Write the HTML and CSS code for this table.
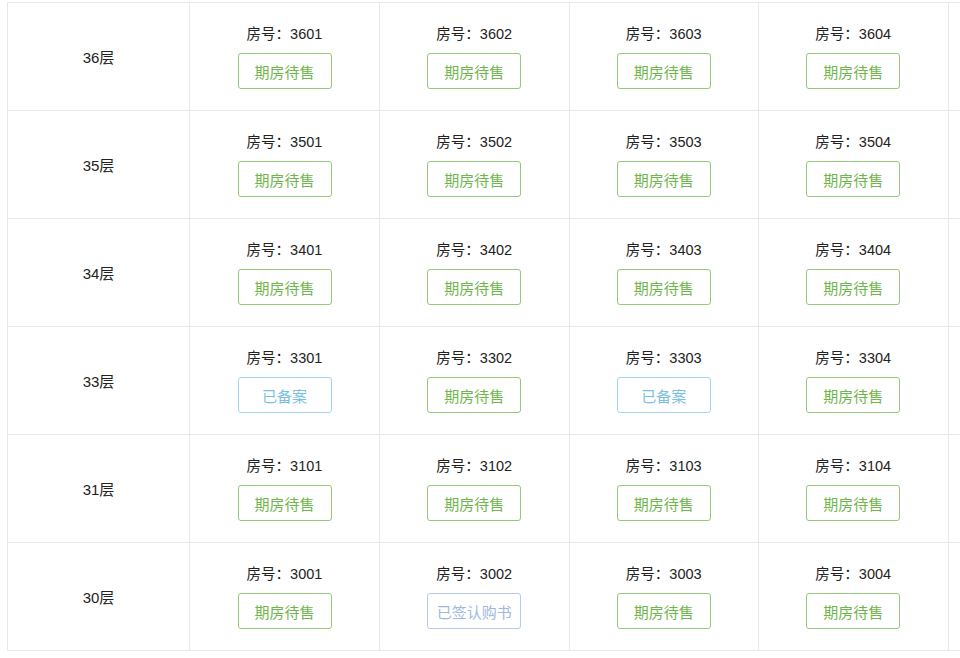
FILE: index.html
```html
<!DOCTYPE html>
<html lang="zh-CN">
<head>
<meta charset="utf-8">
<title>楼盘表</title>
<link rel="stylesheet" href="styles.css">
</head>
<body>
<div class="board">
  <div class="row">
    <div class="floor">36层</div>
    <div class="unit"><div class="no">房号：3601</div><div class="tag sale">期房待售</div></div>
    <div class="unit"><div class="no">房号：3602</div><div class="tag sale">期房待售</div></div>
    <div class="unit"><div class="no">房号：3603</div><div class="tag sale">期房待售</div></div>
    <div class="unit"><div class="no">房号：3604</div><div class="tag sale">期房待售</div></div>
    <div class="unit"></div>
  </div>
  <div class="row">
    <div class="floor">35层</div>
    <div class="unit"><div class="no">房号：3501</div><div class="tag sale">期房待售</div></div>
    <div class="unit"><div class="no">房号：3502</div><div class="tag sale">期房待售</div></div>
    <div class="unit"><div class="no">房号：3503</div><div class="tag sale">期房待售</div></div>
    <div class="unit"><div class="no">房号：3504</div><div class="tag sale">期房待售</div></div>
    <div class="unit"></div>
  </div>
  <div class="row">
    <div class="floor">34层</div>
    <div class="unit"><div class="no">房号：3401</div><div class="tag sale">期房待售</div></div>
    <div class="unit"><div class="no">房号：3402</div><div class="tag sale">期房待售</div></div>
    <div class="unit"><div class="no">房号：3403</div><div class="tag sale">期房待售</div></div>
    <div class="unit"><div class="no">房号：3404</div><div class="tag sale">期房待售</div></div>
    <div class="unit"></div>
  </div>
  <div class="row">
    <div class="floor">33层</div>
    <div class="unit"><div class="no">房号：3301</div><div class="tag filed">已备案</div></div>
    <div class="unit"><div class="no">房号：3302</div><div class="tag sale">期房待售</div></div>
    <div class="unit"><div class="no">房号：3303</div><div class="tag filed">已备案</div></div>
    <div class="unit"><div class="no">房号：3304</div><div class="tag sale">期房待售</div></div>
    <div class="unit"></div>
  </div>
  <div class="row">
    <div class="floor">31层</div>
    <div class="unit"><div class="no">房号：3101</div><div class="tag sale">期房待售</div></div>
    <div class="unit"><div class="no">房号：3102</div><div class="tag sale">期房待售</div></div>
    <div class="unit"><div class="no">房号：3103</div><div class="tag sale">期房待售</div></div>
    <div class="unit"><div class="no">房号：3104</div><div class="tag sale">期房待售</div></div>
    <div class="unit"></div>
  </div>
  <div class="row">
    <div class="floor">30层</div>
    <div class="unit"><div class="no">房号：3001</div><div class="tag sale">期房待售</div></div>
    <div class="unit"><div class="no">房号：3002</div><div class="tag signed">已签认购书</div></div>
    <div class="unit"><div class="no">房号：3003</div><div class="tag sale">期房待售</div></div>
    <div class="unit"><div class="no">房号：3004</div><div class="tag sale">期房待售</div></div>
    <div class="unit"></div>
  </div>
</div>
</body>
</html>
```
FILE: styles.css
```css
html, body {
  margin: 0;
  padding: 0;
  background: #fff;
  overflow: hidden;
}
body {
  font-family: "Liberation Sans", "Noto Sans CJK SC", sans-serif;
  color: #222;
}
.board {
  margin: 2px 0 0 7px;
  width: 953px;
  overflow: hidden;
  border-top: 1px solid #e8e8e8;
  border-left: 1px solid #e8e8e8;
}
.row {
  display: grid;
  grid-template-columns: 182px 190px 189.5px 189.5px 189.5px 1fr;
  height: 108px;
}
.floor, .unit {
  border-right: 1px solid #e8e8e8;
  border-bottom: 1px solid #e8e8e8;
  display: flex;
  flex-direction: column;
  align-items: center;
  justify-content: center;
  box-sizing: border-box;
  min-width: 0;
}
.floor {
  font-size: 15px;
  color: #222;
}
.no {
  font-size: 14.5px;
  line-height: 20px;
  color: #222;
}
.tag {
  margin-top: 9px;
  box-sizing: border-box;
  min-width: 94px;
  height: 36px;
  padding: 0 8px;
  border: 1px solid;
  border-radius: 3px;
  font-size: 15px;
  display: flex;
  align-items: center;
  justify-content: center;
}
.sale {
  border-color: #93c977;
  color: #6fb64c;
}
.filed {
  border-color: #a3d5ec;
  color: #7cc1e2;
}
.signed {
  border-color: #b5cbe9;
  color: #9fb8de;
}
```
